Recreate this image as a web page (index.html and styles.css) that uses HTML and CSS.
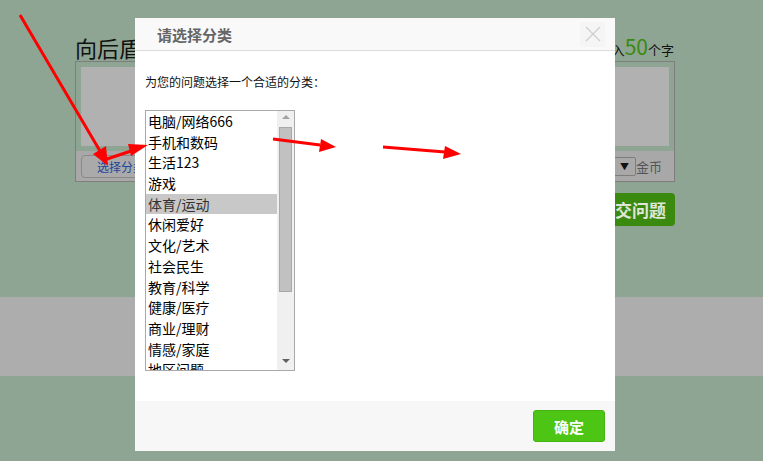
FILE: index.html
```html
<!DOCTYPE html>
<html lang="zh-CN">

<head>
    <meta charset="utf-8">
    <meta name="viewport" content="width=device-width, initial-scale=1.0">
    <link rel="stylesheet" href="styles.css">
</head>

<body>

    <div class="page">
        <div class="ask-head">
            <h1>向后盾网提问</h1>
            <div class="limit">还可以输入<b>50</b>个字</div>
        </div>

        <div class="editor">
            <div class="editor-text"></div>
            <div class="editor-bar">
                <button class="cate-btn">选择分类</button>
                <div class="reward">
                    <span class="reward-select"><i>&#9660;</i></span>
                    <span>金币</span>
                </div>
            </div>
        </div>

        <div class="submit-row">
            <button class="submit-btn">提交问题</button>
        </div>
    </div>

    <div class="band"></div>

    <!-- category dialog -->
    <div class="dialog">
        <div class="dialog-head">
            <span class="dialog-title">请选择分类</span>
            <span class="dialog-close">
                <svg width="16" height="16" viewBox="0 0 16 16">
                    <path d="M1 1 L15 15 M15 1 L1 15" stroke="#cccccc" stroke-width="1.1" fill="none" />
                </svg>
            </span>
        </div>
        <div class="dialog-body">
            <p class="tip">为您的问题选择一个合适的分类：</p>
            <div class="cate-list">
                <ul>
                    <li>电脑/网络666</li>
                    <li>手机和数码</li>
                    <li>生活123</li>
                    <li>游戏</li>
                    <li class="active">体育/运动</li>
                    <li>休闲爱好</li>
                    <li>文化/艺术</li>
                    <li>社会民生</li>
                    <li>教育/科学</li>
                    <li>健康/医疗</li>
                    <li>商业/理财</li>
                    <li>情感/家庭</li>
                    <li>地区问题</li>
                </ul>
                <div class="scrollbar">
                    <span class="arrow-up"></span>
                    <span class="thumb"></span>
                    <span class="arrow-down"></span>
                </div>
            </div>
        </div>
        <div class="dialog-foot">
            <button class="ok-btn">确定</button>
        </div>
    </div>

    <!-- red annotation arrows drawn over the screenshot -->
    <svg class="marks" width="763" height="461" viewBox="0 0 763 461">
        <g stroke="#ff0000" stroke-width="3" fill="#ff0000">
            <line x1="20" y1="15" x2="100" y2="151" />
            <polygon points="108,166 93,154 106,146" stroke="none" />
            <line x1="104" y1="160" x2="134" y2="150" />
            <polygon points="148,145 131,156 128,144" stroke="none" />
            <line x1="273" y1="139" x2="320" y2="145" />
            <polygon points="336,147 319,152 321,139" stroke="none" />
            <line x1="383" y1="147" x2="445" y2="152" />
            <polygon points="461,154 443,159 445,146" stroke="none" />
        </g>
    </svg>

</body>

</html>
```

FILE: styles.css
```css
* {
    box-sizing: border-box;
}

body {
    margin: 0;
    background-color: #8fa593;
    font-family: "Noto Sans CJK SC", "Liberation Sans", sans-serif;
    color: #111;
}

button {
    font-family: inherit;
}

/* page behind the dialog */
.page {
    width: 600px;
    margin-left: 75px;
    padding-top: 31px;
}

.ask-head {
    display: flex;
    justify-content: space-between;
    align-items: flex-end;
    height: 30px;
}

.ask-head h1 {
    margin: 0;
    font-size: 22px;
    font-weight: normal;
    line-height: 28px;
}

.limit {
    font-size: 13px;
    line-height: 22px;
    margin-right: 1px;
}

.limit b {
    font-size: 21px;
    font-weight: normal;
    color: #3a8a10;
}

.editor {
    border: 1px solid #7e7e7e;
    height: 121px;
}

.editor-text {
    margin: 5px;
    height: 79px;
    background-color: #b1b1b1;
}

.editor-bar {
    display: flex;
    justify-content: space-between;
    align-items: center;
    height: 30px;
    background-color: #a8a8a8;
    padding: 0 12px 0 5px;
}

.cate-btn {
    height: 23px;
    width: 80px;
    border: 1px solid #8a8a8a;
    border-radius: 4px;
    background-color: #aaaaaa;
    color: #23449a;
    font-size: 12px;
    padding: 0;
}

.reward {
    display: flex;
    align-items: center;
    font-size: 13px;
    color: #555;
}

.reward-select {
    width: 80px;
    height: 19px;
    border: 1px solid #7e7e7e;
    border-radius: 2px;
    display: flex;
    justify-content: flex-end;
    align-items: center;
    padding-right: 6px;
    font-size: 9px;
    color: #111;
}

.reward-select i {
    font-style: normal;
}

.submit-row {
    display: flex;
    justify-content: flex-end;
    margin-top: 11px;
}

.submit-btn {
    width: 86px;
    height: 33px;
    border: none;
    border-radius: 4px;
    background-color: #3a8a10;
    color: #dfe6d9;
    font-size: 17px;
    font-weight: bold;
    padding: 0;
}

.band {
    margin-top: 71px;
    height: 79px;
    background-color: #adadad;
}

/* dialog */
.dialog {
    position: fixed;
    left: 135px;
    top: 18px;
    width: 480px;
    height: 433px;
    background-color: #fff;
    display: flex;
    flex-direction: column;
}

.dialog-head {
    height: 33px;
    background-color: #f9f9f9;
    border-bottom: 1px solid #dcdcdc;
    display: flex;
    justify-content: space-between;
    align-items: center;
    padding: 0 10px 0 22px;
}

.dialog-title {
    font-size: 15px;
    font-weight: bold;
    color: #666;
}

.dialog-close {
    width: 25px;
    height: 25px;
    background-color: #f5f5f5;
    display: flex;
    justify-content: center;
    align-items: center;
}

.dialog-body {
    flex: 1;
    padding: 0 10px;
}

.tip {
    margin: 22px 0 0;
    font-size: 12px;
    line-height: 17px;
}

.cate-list {
    margin-top: 20px;
    width: 150px;
    height: 261px;
    border: 1px solid #a9a9a9;
    display: flex;
    overflow: hidden;
}

.cate-list ul {
    flex: 1;
    margin: 0;
    padding: 0;
    list-style: none;
    overflow: hidden;
}

.cate-list li {
    height: 20.7px;
    line-height: 21px;
    font-size: 14px;
    padding-left: 2px;
    color: #000;
    white-space: nowrap;
}

.cate-list li.active {
    background-color: #c8c8c8;
    color: #333;
}

.scrollbar {
    width: 17px;
    background-color: #f0f0f0;
    display: flex;
    flex-direction: column;
    align-items: center;
    padding: 4px 0 4px;
}

.arrow-up,
.arrow-down {
    width: 0;
    height: 0;
    border-left: 4px solid transparent;
    border-right: 4px solid transparent;
}

.arrow-up {
    border-bottom: 4px solid #a3a3a3;
}

.arrow-down {
    border-top: 4px solid #606060;
    margin-top: auto;
    margin-bottom: 3px;
}

.thumb {
    width: 13px;
    height: 165px;
    margin-top: 8px;
    background-color: #c1c1c1;
    border: 1px solid #a8a8a8;
}

.dialog-foot {
    height: 50px;
    background-color: #f7f7f7;
    display: flex;
    justify-content: flex-end;
    align-items: center;
    padding-right: 10px;
}

.ok-btn {
    width: 72px;
    height: 32px;
    border: 1px solid #45b312;
    border-radius: 3px;
    background-color: #4cc514;
    color: #fff;
    font-size: 15px;
    font-weight: bold;
    padding: 0;
}

/* annotation layer */
.marks {
    position: absolute;
    left: 0;
    top: 0;
    pointer-events: none;
}
```
